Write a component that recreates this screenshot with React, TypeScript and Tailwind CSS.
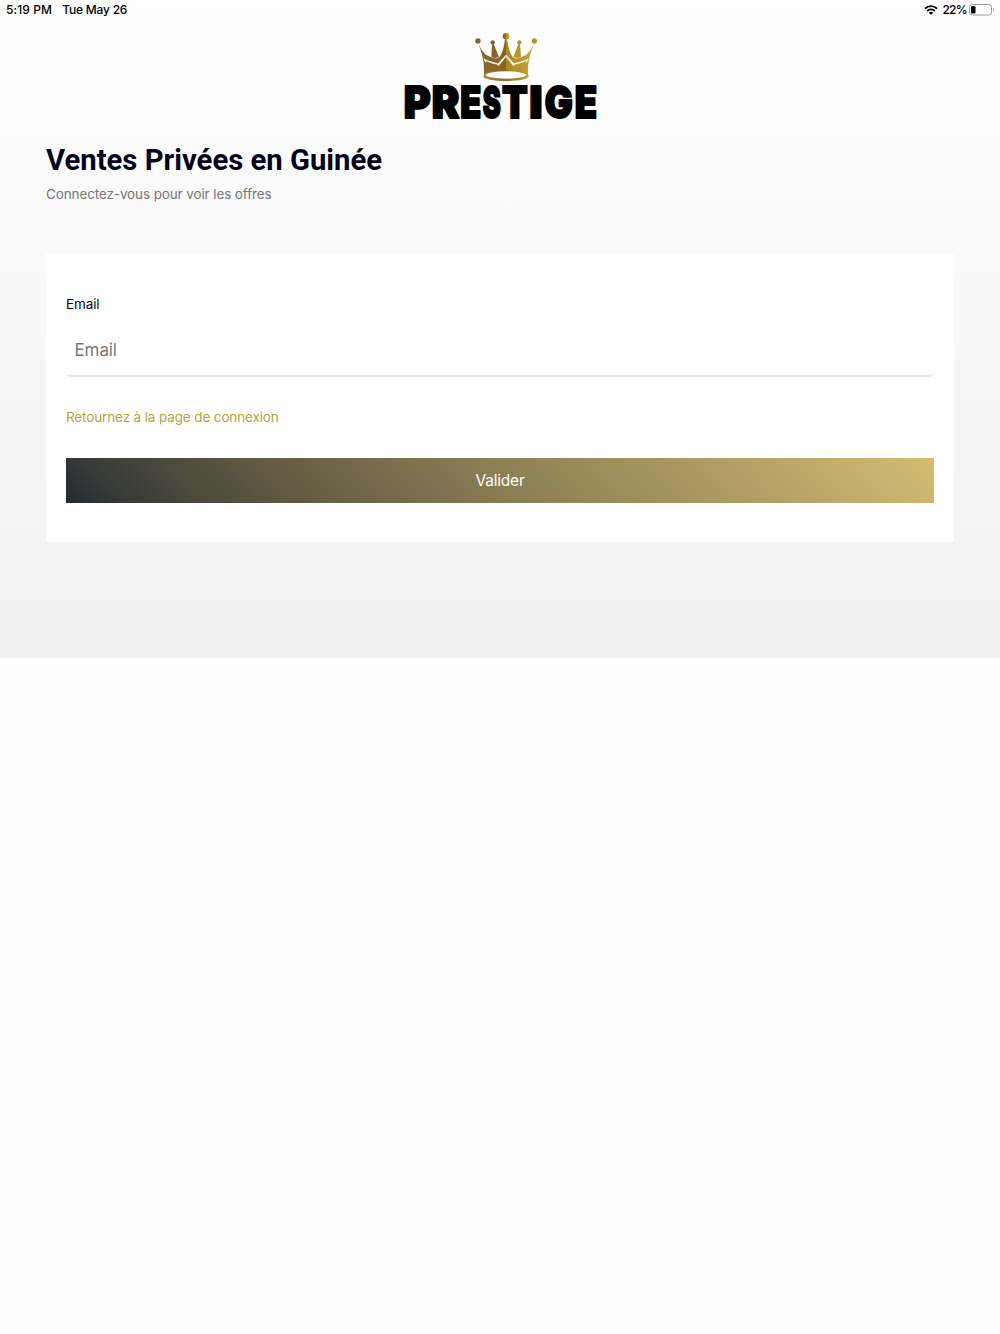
import { useState } from 'react';

// each letter is fitted to its own width to get the wide, heavy wordmark
const wordmark = [
  { char: 'P', x: 26, width: 81 },
  { char: 'R', x: 110, width: 83 },
  { char: 'E', x: 196, width: 63 },
  { char: 'S', x: 263, width: 54 },
  { char: 'T', x: 321, width: 77 },
  { char: 'I', x: 403, width: 40 },
  { char: 'G', x: 449, width: 84 },
  { char: 'E', x: 539, width: 67 },
];

function StatusBar() {
  return (
    <div className="flex h-5 items-center justify-between pr-[5px] pl-[6px] font-['Inter','Liberation_Sans',sans-serif] text-[12px] font-medium text-black">
      <div className="flex gap-[10px]">
        <span className="tracking-[0.1px]">5:19 PM</span>
        <span className="tracking-[-0.2px]">Tue May 26</span>
      </div>
      <div className="flex items-center">
        <svg width="14" height="10" viewBox="0 0 14 10" fill="none" className="mr-[4px]">
          <path d="M1 3.6a8.6 8.6 0 0 1 12 0" stroke="#000" strokeWidth="1.9" />
          <path d="M3.2 6a5.4 5.4 0 0 1 7.6 0" stroke="#000" strokeWidth="1.8" />
          <path d="M7 9.8 4.9 7.7a3 3 0 0 1 4.2 0z" fill="#000" />
        </svg>
        <span className="tracking-[-0.7px]">22%</span>
        <svg width="26" height="12" viewBox="0 0 26 12" fill="none" className="ml-[2px]">
          <rect x="0.5" y="0.5" width="22" height="10.5" rx="3" stroke="#999" />
          <rect x="2" y="2" width="4.5" height="7.5" rx="1.2" fill="#000" />
          <path d="M24.2 4v3.6c1.2-.5 1.2-3.1 0-3.6z" fill="#999" />
        </svg>
      </div>
    </div>
  );
}

function Logo() {
  return (
    <svg
      width="210"
      height="100"
      viewBox="0 0 630 300"
      className="mx-auto mt-[5px] block overflow-visible"
      role="img"
      aria-label="Prestige"
    >
      <defs>
        <linearGradient id="crownLeft" x1="0" x2="1">
          <stop offset="0" stopColor="#8c682b" />
          <stop offset="1" stopColor="#87632a" />
        </linearGradient>
        <linearGradient id="crownRight" x1="0" x2="1">
          <stop offset="0" stopColor="#ad8820" />
          <stop offset="1" stopColor="#c6a63a" />
        </linearGradient>
        <linearGradient id="crownRing" x1="0" x2="1">
          <stop offset="0" stopColor="#ad8b3d" />
          <stop offset="0.5" stopColor="#8d6a28" />
          <stop offset="1" stopColor="#c5a22f" />
        </linearGradient>
      </defs>
      {/* crown */}
      <g fill="#896429">
        <circle cx="249" cy="48" r="8" />
        <circle cx="293" cy="52" r="6.5" />
        <path d="M291 57h5l16 39-14 4-9-5z" />
      </g>
      <g fill="#b7952e">
        <circle cx="418" cy="48" r="8" />
        <circle cx="373" cy="52" r="6.5" />
        <path d="M370 57h5l3 38-9 5-14-4z" />
      </g>
      <path d="M333 24a10 10 0 0 0 0 20z" fill="#8d6829" />
      <path d="M333 24a10 10 0 0 1 0 20z" fill="#b8952d" />
      <path
        d="M249 54c10 21 19 34 33 40 12 6 23 9 31 3 9-10 14-32 17-54h3v95c-25 0-48 3-66 11 2-36-6-65-18-95z"
        fill="url(#crownLeft)"
      />
      <path
        d="M418 54c-10 21-19 34-33 40-12 6-23 9-31 3-9-10-14-32-18-54h-3v95c25 0 48 3 66 11-2-36 7-65 19-95z"
        fill="url(#crownRight)"
      />
      {/* highlights on the crown points */}
      <path
        d="M265 99c8 6 22 11 44 16l24-26 24 26c22-5 36-10 44-16-2 7-5 12-9 16l1-7c-11 6-22 9-34 11l-4 5-22-28-22 28-4-5c-12-2-23-5-34-11l1 7c-4-4-7-9-9-16z"
        fill="#f7efda"
      />
      <path
        d="M333 136c38 0 68 7 68 17s-30 15-68 15-68-5-68-15 30-17 68-17z"
        fill="url(#crownRing)"
      />
      <ellipse cx="333" cy="150" rx="60" ry="11" fill="#fff" />
      <g
        fontSize="131"
        fontWeight="900"
        stroke="#000"
        strokeWidth="6"
        strokeLinejoin="round"
        className="font-['Inter','Liberation_Sans',sans-serif]"
      >
        {wordmark.map(({ char, x, width }) => (
          <text key={x} x={x} y="278" textLength={width} lengthAdjust="spacingAndGlyphs">
            {char}
          </text>
        ))}
      </g>
    </svg>
  );
}

export default function App() {
  const [email, setEmail] = useState('');

  return (
    <div className="min-h-[1334px] bg-[#fefefe] font-['Inter','Liberation_Sans',sans-serif]">
      <div className="h-[658px] bg-linear-to-b from-white to-[#f0f0f0]">
        <StatusBar />
        <Logo />

        <main className="px-[46px] pt-[15px]">
          <h1 className="font-['Roboto',sans-serif] text-[29.25px] leading-10 font-bold whitespace-nowrap text-[#04031e]">
            Ventes Privées en Guinée
          </h1>
          <p className="mt-1 text-[13.5px] leading-5 tracking-[-0.12px] text-[#777]">
            Connectez-vous pour voir les offres
          </p>

          <form
            onSubmit={(e) => e.preventDefault()}
            className="mt-[50px] h-[287.5px] bg-white px-5 pt-10"
          >
            <label
              htmlFor="email"
              className="block text-[13.5px] leading-5 tracking-[-0.12px] text-[#04031e]"
            >
              Email
            </label>
            <input
              id="email"
              type="email"
              placeholder="Email"
              value={email}
              onChange={(e) => setEmail(e.target.value)}
              className="mt-[18px] block h-[45px] w-full rounded-[5px] border-b-2 border-[#e4e4e4] bg-white px-[8.5px] pb-[7px] text-[17px] tracking-[-0.1px] placeholder:text-[#777]"
            />
            <a
              href="#"
              className="mt-[30px] block text-[13.5px] leading-5 tracking-[-0.13px] text-[#bd9f3d]"
            >
              Retournez à la page de connexion
            </a>
            <button
              type="submit"
              className="mt-[30.5px] block h-[45px] w-full bg-[linear-gradient(45deg,#232a34_0%,#363937_6%,#4b4a3d_15%,#635a43_26%,#8a7e54_50%,#d4bc72_100%)] pt-[2px] text-[15.5px] tracking-[-0.2px] text-white"
            >
              Valider
            </button>
          </form>
        </main>
      </div>
    </div>
  );
}
